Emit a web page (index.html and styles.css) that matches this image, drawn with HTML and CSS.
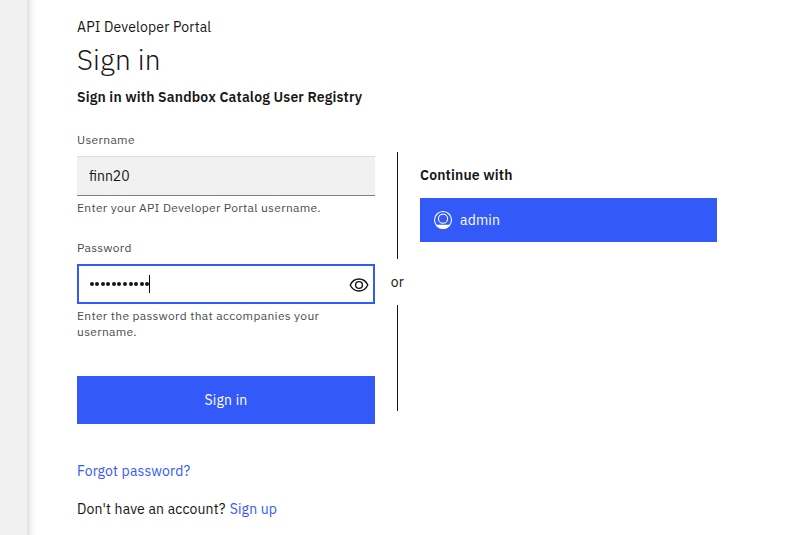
FILE: index.html
```
<!DOCTYPE html>
<html lang="en">
<head>
<meta charset="utf-8">
<title>Sign in</title>
<link rel="stylesheet" href="styles.css">
</head>
<body>
<div class="backdrop"></div>
<main class="panel">
  <header>
    <p class="site">API Developer Portal</p>
    <h1>Sign in</h1>
    <h2 class="registry">Sign in with Sandbox Catalog User Registry</h2>
  </header>
  <div class="columns">
    <form class="login">
      <label class="label">Username</label>
      <div class="field"><span class="value">finn20</span></div>
      <p class="help"><span>Enter your API Developer Portal username.</span></p>
      <label class="label second">Password</label>
      <div class="field focused">
        <span class="dots"><i></i><i></i><i></i><i></i><i></i><i></i><i></i><i></i><i></i><i></i><i></i></span><span class="caret"></span>
        <svg class="eye" viewBox="0 0 20 16" fill="none" stroke="#161616" stroke-width="1.4"><path d="M1.200 8C3 4.200 6 2 10 2s7 2.200 8.800 6c-1.800 3.800-4.800 6-8.800 6S3 11.800 1.200 8Z"/><circle cx="10" cy="8" r="3.400"/></svg>
      </div>
      <p class="help"><span>Enter the password that accompanies your</span><br><span>username.</span></p>
      <div class="submit"><span>Sign in</span></div>
    </form>
    <div class="divider"><span class="rule"></span><span class="or">or</span><span class="rule"></span></div>
    <section class="providers">
      <h3>Continue with</h3>
      <div class="provider">
        <svg viewBox="0 0 20 20" fill="none" stroke="#fff"><circle cx="10" cy="10" r="8.500" stroke-width="1.100"/><circle cx="10" cy="8.700" r="4.600" stroke-width="1.100"/><path d="M3.200 14.800h13.600C15.300 17.500 12.900 18.800 10 18.800s-5.300-1.300-6.800-4Z" fill="#fff" stroke="none"/></svg>
        <span>admin</span>
      </div>
    </section>
  </div>
  <p class="forgot"><a>Forgot password?</a></p>
  <p class="signup"><span>Don't have an account?</span><a>Sign up</a></p>
</main>
</body>
</html>
```
FILE: styles.css
```
* { box-sizing: border-box; margin: 0; padding: 0; }
body {
  display: flex;
  width: 801px;
  height: 535px;
  overflow: hidden;
  background: #fff;
  color: #161616;
  font: 14px/20px "IBM Plex Sans", Roboto, sans-serif;
  letter-spacing: 0.16px;
}
span, a { white-space: nowrap; }
.backdrop { width: 27px; background: #f1f1f1; }
.panel {
  flex: 1;
  padding: 17px 0 0 50px;
  background: linear-gradient(90deg, #dedede 0, #e9e9e9 2px, #f6f6f6 5px, #fcfcfc 8px, #fff 12px);
}
h1 { margin-top: 4px; font-size: 28px; line-height: 38px; font-weight: 300; letter-spacing: 0.16px; }
.registry { margin-top: 8px; font-size: 14px; font-weight: 600; }
.columns { display: flex; margin-top: 25px; }
.login { width: 298px; }
.label { display: block; height: 16px; margin-bottom: 8px; font-size: 12px; line-height: 16px; color: #4b4b4b; letter-spacing: 0.32px; }
.second { margin-top: 24px; }
.field {
  display: flex;
  align-items: center;
  height: 40px;
  padding: 0 12px;
  background: #f1f1f1;
  border-top: 1px solid #dedede;
  border-bottom: 1px solid #808080;
}
.value { letter-spacing: 0; }
.focused { padding: 0 4px 0 10.500px; border: 2px solid #3359f8; background: #fff; }
.dots { display: flex; gap: 1.600px; }
.dots i { width: 4px; height: 4px; border-radius: 50%; background: #161616; }
.caret { width: 1px; height: 18px; background: #000; }
.eye { width: 20px; height: 16px; margin: 1px 0 0 auto; }
.help { margin-top: 4px; font-size: 12px; line-height: 16px; color: #4b4b4b; letter-spacing: 0.32px; }
.submit { display: flex; align-items: center; justify-content: center; height: 48px; margin-top: 36px; background: #3359f8; color: #fff; font-weight: 400; }
.divider { display: flex; flex-direction: column; align-items: center; width: 45px; height: 259px; margin-top: 20px; }
.rule { width: 1px; height: 107px; background: #161616; }
.rule:last-child { height: 106px; }
.or { height: 46px; line-height: 46px; }
.providers { width: 297px; padding-top: 33px; }
h3 { font-size: 14px; line-height: 20px; font-weight: 600; }
.provider { display: flex; align-items: center; gap: 7px; height: 44px; margin-top: 13px; padding-left: 13px; background: #3359f8; color: #fff; font-weight: 400; }
.provider svg { width: 20px; height: 20px; }
.forgot { margin-top: 37px; }
.signup { display: flex; gap: 4px; margin-top: 18px; }
a { color: #3359f8; }
```
